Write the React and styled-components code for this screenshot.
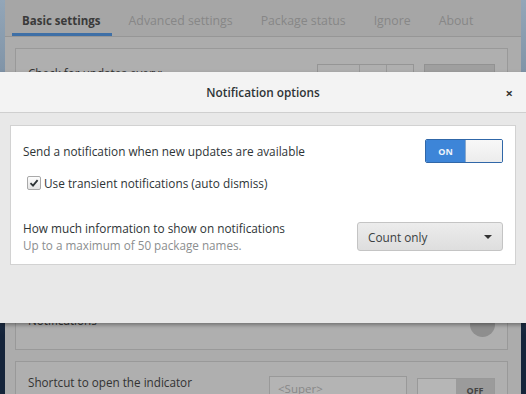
import styled, { createGlobalStyle } from "styled-components";

const Global = createGlobalStyle`
    body {
        margin: 0;
        font-family: "Open Sans", "Noto Sans", sans-serif;
        font-size: 11.8px;
    }
`;

const Screen = styled.div`
    position: relative;
    width: 526px;
    height: 394px;
    overflow: hidden;
    background: linear-gradient(#93a6b8, #5b7086 55%, #15243a 85%);
    display: flex;
    justify-content: center;
`;

const Window = styled.div`
    width: 516px;
    height: 394px;
    overflow: hidden;
    background: #acacac;
    display: flex;
    flex-direction: column;
`;

const TabBar = styled.div`
    height: 37px;
    flex-shrink: 0;
    display: flex;
    align-items: stretch;
    padding-left: 7px;
    border-bottom: 1px solid #969696;
    background: #a6a6a6;
    box-sizing: border-box;
`;

const Tab = styled.div`
    display: flex;
    align-items: center;
    padding: 7px 11px 0 10px;
    margin-right: 7px;
    color: ${p => (p.active ? "#3a3a3a" : "#878787")};
    font-weight: ${p => (p.active ? 700 : 400)};
    font-size: ${p => (p.active ? 11.5 : 12.3)}px;
    white-space: nowrap;
    border-bottom: 3px solid ${p => (p.active ? "#3e6fa6" : "transparent")};
`;

const Content = styled.div`
    flex-shrink: 0;
    padding: 11px 13px 0 10px;
    display: flex;
    flex-direction: column;
    gap: 11px;
`;

const Frame = styled.div`
    height: ${p => p.h}px;
    flex-shrink: 0;
    border: 1px solid #999;
    background: #afafaf;
    display: flex;
    flex-direction: column;
    justify-content: ${p => p.spread ? "space-between" : "flex-start"};
    padding: ${p => p.pad};
    box-sizing: border-box;
`;

const BgRow = styled.div`
    display: flex;
    align-items: ${p => p.top ? "flex-start" : "center"};
    justify-content: space-between;
    color: #333;
    font-size: 11.7px;
`;

const Group = styled.div`
    display: flex;
    align-items: flex-start;
    gap: 10px;
`;

const Spin = styled.div`
    display: flex;
    width: 97px;
    height: 24px;
    border: 1px solid #959595;
    box-sizing: border-box;
    & > span { flex: 1; border-left: 1px solid #999; }
    & > span:first-child { flex: 1.6; border-left: none; }
`;

const GrayButton = styled.div`
    width: ${p => p.w}px;
    height: 24px;
    background: #9f9f9f;
    border: 1px solid #929292;
    box-sizing: border-box;
`;

const BgLabel = styled.span`
    margin-top: ${p => p.shift || 0}px;
`;

const RoundButton = styled.div`
    width: 25px;
    height: 25px;
    border-radius: 50%;
    background: #8e8e8e;
`;

const Entry = styled.div`
    width: 138px;
    height: 24px;
    margin-top: 2px;
    border: 1px solid #999;
    background: #b4b4b4;
    color: #888;
    font-size: 11.5px;
    padding: 4px 8px 0;
    box-sizing: border-box;
`;

const BgSwitch = styled.div`
    display: flex;
    width: 78px;
    height: 24px;
    margin-top: 4px;
    border: 1px solid #999;
    box-sizing: border-box;
    & > span:first-child { flex: 1; background: #b6b6b6; }
    & > span:last-child {
        flex: 1;
        background: #9b9b9b;
        color: #444;
        font-size: 9px;
        font-weight: 700;
        display: flex;
        align-items: center;
        justify-content: center;
    }
`;

const Dialog = styled.div`
    position: absolute;
    left: 0;
    top: 72px;
    width: 526px;
    height: 251px;
    display: flex;
    flex-direction: column;
    background: #e8e8e8;
    box-shadow: 0 2px 4px rgba(0, 0, 0, 0.35);
`;

const Header = styled.div`
    height: 40px;
    background: #f3f3f3;
    border-bottom: 1px solid #cfcfcf;
    display: flex;
    align-items: center;
    justify-content: center;
    position: relative;
    color: #2e3436;
    font-weight: 600;
    font-size: 11.8px;
`;

const Close = styled.span`
    position: absolute;
    right: 13px;
    top: 12px;
    font-size: 13px;
    font-weight: 700;
    color: #333;
`;

const Body = styled.div`
    padding: 12px 10px;
`;

const Card = styled.div`
    height: 140px;
    background: #fff;
    border: 1px solid #d2d2d2;
    box-sizing: border-box;
    padding: 13px 12px 0 12px;
    display: flex;
    flex-direction: column;
    color: #2e3436;
`;

const Row = styled.div`
    display: flex;
    align-items: center;
    justify-content: space-between;
    margin-top: ${p => p.mt || 0}px;
`;

const Label = styled.div`
    font-size: 11.8px;
    line-height: 17px;
`;

const Hint = styled.div`
    font-size: 11.7px;
    color: #8b8e8f;
    line-height: 16px;
`;

const Switch = styled.div`
    display: flex;
    width: 78px;
    height: 24px;
    border: 1px solid #3067a8;
    border-radius: 2px;
    box-sizing: border-box;
    overflow: hidden;
`;

const SwitchOn = styled.div`
    width: 39px;
    background: #3d85d8;
    color: #eef4fb;
    font-size: 9px;
    font-weight: 700;
    display: flex;
    align-items: center;
    justify-content: center;
`;

const Knob = styled.div`
    flex: 1;
    background: linear-gradient(#f8f8f8, #ececec);
    border-left: 1px solid #8aa9cc;
`;

const Check = styled.label`
    display: flex;
    align-items: center;
    gap: 3px;
    margin-left: 4px;
    font-size: 11.8px;
`;

const Box = styled.span`
    width: 12px;
    height: 12px;
    border: 1px solid #a9a9a9;
    border-radius: 2px;
    background: linear-gradient(#fdfdfd, #e4e4e4);
    display: flex;
    align-items: center;
    justify-content: center;
`;

const Combo = styled.div`
    width: 146px;
    height: 29px;
    box-sizing: border-box;
    border: 1px solid #c4c4c4;
    border-radius: 3px;
    background: linear-gradient(#ececec, #dedede);
    display: flex;
    align-items: center;
    justify-content: space-between;
    padding: 0 10px;
    font-size: 11.8px;
    color: #3a3f41;
`;

const Caret = styled.span`
    width: 0;
    height: 0;
    border-left: 4px solid transparent;
    border-right: 4px solid transparent;
    border-top: 4px solid #333;
`;

export default function App() {
    return (
        <Screen>
            <Global />
            <Window>
                <TabBar>
                    <Tab active>Basic settings</Tab>
                    <Tab>Advanced settings</Tab>
                    <Tab>Package status</Tab>
                    <Tab>Ignore</Tab>
                    <Tab>About</Tab>
                </TabBar>
                <Content>
                    <Frame h={302} spread pad="15px 12px 12px 12px">
                        <BgRow>
                            <BgLabel shift={-6}>Check for updates every:</BgLabel>
                            <Group>
                                <Spin><span /><span /><span /></Spin>
                                <GrayButton w={71} />
                            </Group>
                        </BgRow>
                        <BgRow>
                            <BgLabel shift={-9}>Notifications</BgLabel>
                            <RoundButton />
                        </BgRow>
                    </Frame>
                    <Frame h={60} pad="12px 12px 0 12px">
                        <BgRow top>
                            <span>Shortcut to open the indicator</span>
                            <Group>
                                <Entry>&lt;Super&gt;</Entry>
                                <BgSwitch><span /><span>OFF</span></BgSwitch>
                            </Group>
                        </BgRow>
                    </Frame>
                </Content>
            </Window>
            <Dialog>
                <Header>
                    Notification options
                    <Close>×</Close>
                </Header>
                <Body>
                    <Card>
                        <Row>
                            <Label>Send a notification when new updates are available</Label>
                            <Switch>
                                <SwitchOn>ON</SwitchOn>
                                <Knob />
                            </Switch>
                        </Row>
                        <Row mt={12}>
                            <Check>
                                <Box>
                                    <svg width="10" height="10" viewBox="0 0 10 10">
                                        <path d="M1.5 5.2 L4 7.6 L8.6 2.2" fill="none" stroke="#2e3436" strokeWidth="1.8" />
                                    </svg>
                                </Box>
                                Use transient notifications (auto dismiss)
                            </Check>
                        </Row>
                        <Row mt={29}>
                            <div>
                                <Label>How much information to show on notifications</Label>
                                <Hint>Up to a maximum of 50 package names.</Hint>
                            </div>
                            <Combo>
                                Count only
                                <Caret />
                            </Combo>
                        </Row>
                    </Card>
                </Body>
            </Dialog>
        </Screen>
    );
}
